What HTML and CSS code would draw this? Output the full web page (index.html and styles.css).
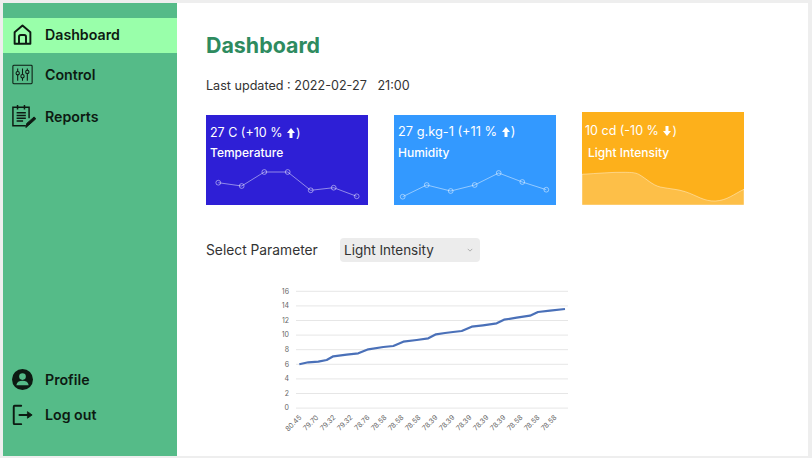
FILE: index.html
```html
<!DOCTYPE html>
<html lang="en">
<head>
    <meta charset="UTF-8">
    <meta name="viewport" content="width=device-width, initial-scale=1.0">
    <title>Dashboard</title>
    <link rel="stylesheet" href="styles.css">
</head>
<body>
    <div class="frame">
        <nav class="sidebar">
            <div class="nav-group">
                <a class="nav-item active" href="#">
                    <svg class="nav-icon" viewBox="0 0 24 24" fill="none" stroke="#0d1a12" stroke-width="2.200" stroke-linejoin="round">
                        <path d="M3 22.500V9.500L12 1.800l9 7.700v13z"/>
                        <path d="M8 22.500v-8a2 2 0 0 1 2-2h4a2 2 0 0 1 2 2v8"/>
                    </svg>
                    Dashboard
                </a>
                <a class="nav-item" href="#">
                    <svg class="nav-icon" viewBox="0 0 24 24" fill="none" stroke="#0d1a12" stroke-width="1.200">
                        <rect x="1" y="1.500" width="22" height="21" rx="1"/>
                        <path d="M6.500 5v3.500M6.500 12.500V19M12 5v7M12 16v3M17.500 5v2M17.500 11v8"/>
                        <circle cx="6.500" cy="10.500" r="1.900"/>
                        <circle cx="12" cy="14" r="1.900"/>
                        <circle cx="17.500" cy="9" r="1.900"/>
                    </svg>
                    Control
                </a>
                <a class="nav-item nav-item-reports" href="#">
                    <svg class="nav-icon nav-icon-big" viewBox="0 0 26 26" fill="none" stroke="#0d1a12" stroke-width="1.600">
                        <path d="M15 23.500H1V3.500h17.500v12"/>
                        <path d="M6 1v5M13.500 1v5M5 9.500h10M5 12.500h10M5 15.500h10M5 18.500h7"/>
                        <path d="M15 25.500l1-4.500 8-7 1.800 2-8 7.200z" fill="#0d1a12" stroke-width="1"/>
                    </svg>
                    Reports
                </a>
            </div>
            <div class="nav-group">
                <a class="nav-item" href="#">
                    <svg class="nav-icon" viewBox="0 0 24 24">
                        <circle cx="12" cy="12" r="12" fill="#0d1a12"/>
                        <circle cx="12" cy="8.700" r="3.800" fill="#55bb88"/>
                        <path d="M5 18.500c.4-3.500 3-5 7-5s6.600 1.500 7 5z" fill="#55bb88"/>
                    </svg>
                    Profile
                </a>
                <a class="nav-item" href="#">
                    <svg class="nav-icon" viewBox="0 0 24 24" fill="none" stroke="#0d1a12" stroke-width="2.200" stroke-linecap="round" stroke-linejoin="round">
                        <path d="M10.500 2H3a1 1 0 0 0-1 1v19a1 1 0 0 0 1 1h7.500"/>
                        <path d="M8.500 12.500H19"/>
                        <path d="M18 9l5 3.500-5 3.500z" fill="#0d1a12" stroke-width="1"/>
                    </svg>
                    Log out
                </a>
            </div>
        </nav>

        <main class="content">
            <h1 class="title">Dashboard</h1>
            <p class="updated">Last updated : 2022-02-27 &nbsp; 21:00</p>

            <section class="cards">
                <div class="card card-temp">
                    <div class="card-value">27 C (+10 % <svg class="arrow" viewBox="0 0 8 10"><path d="M4 0l4 5H5.500v5h-3V5H0z"/></svg>)</div>
                    <div class="card-name">Temperature</div>
                    <svg class="spark" viewBox="0 0 162 45">
                        <polyline points="12.300,22.700 35.700,26 58.300,12 81.700,12 104.700,30.300 127.700,27.700 150.700,36.300"/>
                        <circle cx="12.300" cy="22.700" r="2.400"/>
                        <circle cx="35.700" cy="26" r="2.400"/>
                        <circle cx="58.300" cy="12" r="2.400"/>
                        <circle cx="81.700" cy="12" r="2.400"/>
                        <circle cx="104.700" cy="30.300" r="2.400"/>
                        <circle cx="127.700" cy="27.700" r="2.400"/>
                        <circle cx="150.700" cy="36.300" r="2.400"/>
                    </svg>
                </div>
                <div class="card card-hum">
                    <div class="card-value">27 g.kg-1 (+11 % <svg class="arrow" viewBox="0 0 8 10"><path d="M4 0l4 5H5.500v5h-3V5H0z"/></svg>)</div>
                    <div class="card-name">Humidity</div>
                    <svg class="spark" viewBox="0 0 162 45">
                        <polyline points="8.700,36.700 32.700,25 56.700,31 80.700,25 104.700,13 128.300,22 152.300,29.700"/>
                        <circle cx="8.700" cy="36.700" r="2.400"/>
                        <circle cx="32.700" cy="25" r="2.400"/>
                        <circle cx="56.700" cy="31" r="2.400"/>
                        <circle cx="80.700" cy="25" r="2.400"/>
                        <circle cx="104.700" cy="13" r="2.400"/>
                        <circle cx="128.300" cy="22" r="2.400"/>
                        <circle cx="152.300" cy="29.700" r="2.400"/>
                    </svg>
                </div>
                <div class="card card-light">
                    <div class="card-value">10 cd (-10 % <svg class="arrow" viewBox="0 0 8 10"><path d="M4 10l4-5H5.500V0h-3v5H0z"/></svg>)</div>
                    <div class="card-name">Light Intensity</div>
                    <svg class="spark" viewBox="0 0 162 45">
                        <path class="area" d="M0 14.300C15 13.500 30 12 43.300 12.300C50 12.500 53 12.500 56.700 14.300C65 19 70 25 78.300 27C88 29 95 29 103.300 31.700C115 35.500 122 41.500 133.300 41C145 40.500 152 34 162 29.300V45H0z"/>
                    </svg>
                </div>
            </section>

            <div class="param-row">
                <label class="param-label" for="param">Select Parameter</label>
                <div class="param-select" id="param">
                    Light Intensity
                    <svg class="chevron" viewBox="0 0 8 5" fill="none" stroke="#999" stroke-width="1"><path d="M1 1l3 3 3-3"/></svg>
                </div>
            </div>

            <svg class="chart" viewBox="0 0 320 160">
                <!-- rejilla: cada 2 unidades = 14.6px -->
                <g class="grid">
                    <path d="M26 11.300H298M26 25.900H298M26 40.500H298M26 55.100H298M26 69.700H298M26 84.300H298M26 98.900H298M26 113.500H298M26 128.100H298"/>
                </g>
                <g class="y-labels">
                    <text x="19" y="13.500">16</text>
                    <text x="19" y="28">14</text>
                    <text x="19" y="42.500">12</text>
                    <text x="19" y="57">10</text>
                    <text x="19" y="71.500">8</text>
                    <text x="19" y="86.500">6</text>
                    <text x="19" y="101">4</text>
                    <text x="19" y="116">2</text>
                    <text x="19" y="130">0</text>
                </g>
                <polyline class="line" points="29.300,84.300 38.300,82.300 48.300,81.700 56.700,80 63.300,76.300 76.700,74.700 88.300,73.300 98.300,69.300 113.300,67 123.300,66 133.300,61.700 146.700,60 158.300,58.300 166,54.300 175,53 183,52 191.700,51 201.700,46.700 213,45.300 226.700,43.300 234,39.700 246.700,37.700 260,35.700 268,32 280,30.700 295,29"/>
                <g class="x-labels">
                    <text transform="translate(32 138) rotate(-45)">80.45</text>
                    <text transform="translate(49 138) rotate(-45)">79.70</text>
                    <text transform="translate(66 138) rotate(-45)">79.32</text>
                    <text transform="translate(83 138) rotate(-45)">79.32</text>
                    <text transform="translate(100 138) rotate(-45)">78.76</text>
                    <text transform="translate(117 138) rotate(-45)">78.58</text>
                    <text transform="translate(134 138) rotate(-45)">78.58</text>
                    <text transform="translate(151 138) rotate(-45)">78.58</text>
                    <text transform="translate(168 138) rotate(-45)">78.39</text>
                    <text transform="translate(185 138) rotate(-45)">78.39</text>
                    <text transform="translate(202 138) rotate(-45)">78.39</text>
                    <text transform="translate(219 138) rotate(-45)">78.39</text>
                    <text transform="translate(236 138) rotate(-45)">78.39</text>
                    <text transform="translate(253 138) rotate(-45)">78.58</text>
                    <text transform="translate(270 138) rotate(-45)">78.58</text>
                    <text transform="translate(287 138) rotate(-45)">78.58</text>
                </g>
            </svg>
        </main>
    </div>
</body>
</html>
```

FILE: styles.css
```css
* {
    box-sizing: border-box;
}

html, body {
    height: 100%;
}

body {
    font-family: Inter, "Liberation Sans", sans-serif;
    margin: 0;
    padding: 3px 4px 2px 3px;
    background-color: #eeeeee;
    color: #333;
    overflow: hidden;
}

.frame {
    display: flex;
    height: 100%;
    background-color: #fff;
}

/* barra lateral */
.sidebar {
    width: 174px;
    flex-shrink: 0;
    background-color: #55bb88;
    padding: 15px 0 23px;
    display: flex;
    flex-direction: column;
    justify-content: space-between;
}

.nav-group {
    display: flex;
    flex-direction: column;
}

.nav-item {
    display: flex;
    align-items: center;
    gap: 12px;
    height: 35px;
    margin-bottom: 5px;
    padding: 0 0 3px 9px;
    color: #0d1a12;
    font-size: 14.200px;
    font-weight: 600;
    text-decoration: none;
}

.nav-group:last-child .nav-item {
    margin-bottom: 0;
}

.nav-item.active {
    background-color: #99ffaa;
}

.nav-item-reports {
    margin-top: 2px;
}

.nav-icon {
    width: 21px;
    height: 21px;
    flex-shrink: 0;
}

.nav-icon-big {
    width: 24px;
    height: 24px;
    margin-right: -3px;
}

/* contenido */
.content {
    flex: 1;
    padding: 29px 0 0 29px;
}

.title {
    margin: 0;
    color: #2e8b5f;
    font-size: 21.400px;
    font-weight: 700;
    line-height: 26px;
}

.updated {
    margin: 20px 0 0;
    font-size: 12.600px;
    line-height: 16px;
}

.cards {
    display: flex;
    align-items: flex-end;
    gap: 26px;
    margin-top: 18px;
}

.card {
    position: relative;
    width: 162px;
    height: 90px;
    padding: 10px 4px 0;
    color: #fff;
    display: flex;
    flex-direction: column;
}

.card-temp {
    background-color: #2e1fd6;
}

.card-hum {
    padding-top: 9px;
    background-color: #3399ff;
}

.card-light {
    height: 93px;
    padding: 11px 3px 0;
    background-color: #fdb01b;
}

.card-value {
    font-size: 12.500px;
    line-height: 16px;
}

.card-hum .card-value {
    font-size: 12.800px;
}

.card-light .card-value {
    font-size: 12.500px;
}

.card-name {
    margin-top: 4px;
    font-size: 12px;
    line-height: 16px;
    font-weight: 500;
}

.card-hum .card-name {
    margin-top: 5px;
}

.card-light .card-name {
    margin-top: 6px;
    padding-left: 3px;
}

.arrow {
    width: 8px;
    height: 10px;
    margin: 0 1px;
    vertical-align: -1px;
    fill: #fff;
}

.spark {
    position: absolute;
    left: 0;
    bottom: 0;
    width: 162px;
    height: 45px;
    fill: none;
    stroke: rgba(255, 255, 255, 0.6);
    stroke-width: 0.800;
}

.spark .area {
    fill: rgba(255, 255, 255, 0.2);
    stroke: rgba(255, 255, 255, 0.5);
}

.param-row {
    display: flex;
    align-items: center;
    margin-top: 33px;
}

.param-label {
    width: 134px;
    font-size: 13.800px;
}

.param-select {
    width: 140px;
    height: 24px;
    padding: 0 4px;
    display: flex;
    align-items: center;
    justify-content: space-between;
    background-color: #ececec;
    border-radius: 4px;
    font-size: 13.500px;
    color: #333;
}

.chevron {
    width: 6px;
    height: 4px;
    margin-right: 3px;
}

/* grafico */
.chart {
    display: block;
    width: 320px;
    height: 160px;
    margin: 18px 0 0 64px;
}

.grid path {
    fill: none;
    stroke: #e6e6e6;
    stroke-width: 1;
}

.y-labels text {
    font-size: 7px;
    fill: #666;
    text-anchor: end;
}

.x-labels text {
    font-size: 7px;
    fill: #666;
    text-anchor: end;
}

.line {
    fill: none;
    stroke: #4a70b8;
    stroke-width: 2.200;
    stroke-linejoin: round;
}
```
